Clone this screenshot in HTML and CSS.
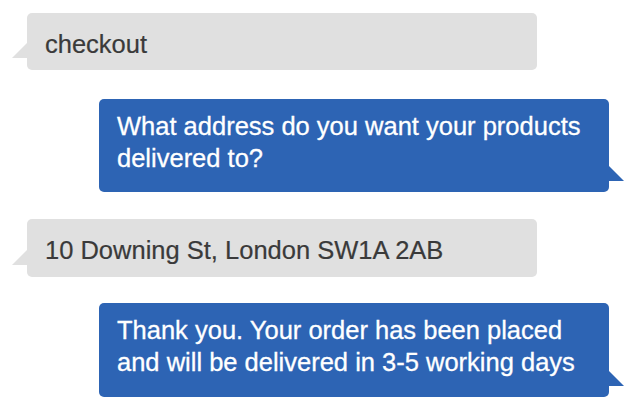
FILE: index.html
```html
<!DOCTYPE html>
<html>
<head>
<meta charset="utf-8">
<link rel="stylesheet" href="styles.css">
</head>
<body>
<div class="chat">
  <div class="msg msg-in msg-first">checkout</div>
  <div class="msg msg-out msg-second">What address do you want your products delivered to?</div>
  <div class="msg msg-in msg-third">10 Downing St, London SW1A 2AB</div>
  <div class="msg msg-out msg-fourth">Thank you. Your order has been placed and will be delivered in 3-5 working days</div>
</div>
</body>
</html>
```
FILE: styles.css
```css
html, body {
  margin: 0;
  padding: 0;
  background: #ffffff;
}
.chat {
  display: flex;
  flex-direction: column;
  padding: 13px 33px 0 27px;
  font-family: "Liberation Sans", Arial, Helvetica, sans-serif;
  font-size: 25.5px;
  line-height: 32px;
}
.msg {
  position: relative;
  width: 510px;
  box-sizing: border-box;
  padding-left: 18px;
  padding-right: 16px;
  border-radius: 5px;
}
.msg::after {
  content: "";
  position: absolute;
  width: 0;
  height: 0;
}
.msg-in {
  align-self: flex-start;
  background: #e0e0e0;
  color: #3a3a3a;
  -webkit-text-stroke: 0.2px #3a3a3a;
  padding-top: 15px;
  padding-bottom: 11px;
}
.msg-in::after {
  left: -15px;
  bottom: 12px;
  border-bottom: 15px solid #e0e0e0;
  border-left: 15px solid transparent;
}
.msg-out {
  align-self: flex-end;
  background: #2d64b4;
  color: #ffffff;
  -webkit-text-stroke: 0.3px #ffffff;
  padding-top: 11px;
  padding-bottom: 18px;
  padding-left: 18px;
}
.msg-out::after {
  right: -15px;
  bottom: 11px;
  border-bottom: 15px solid #2d64b4;
  border-right: 15px solid transparent;
}
.msg-first { padding-bottom: 10px; }
.msg-second { margin-top: 29px; }
.msg-third { margin-top: 27px; }
.msg-fourth { margin-top: 26px; padding-bottom: 19px; }
```
